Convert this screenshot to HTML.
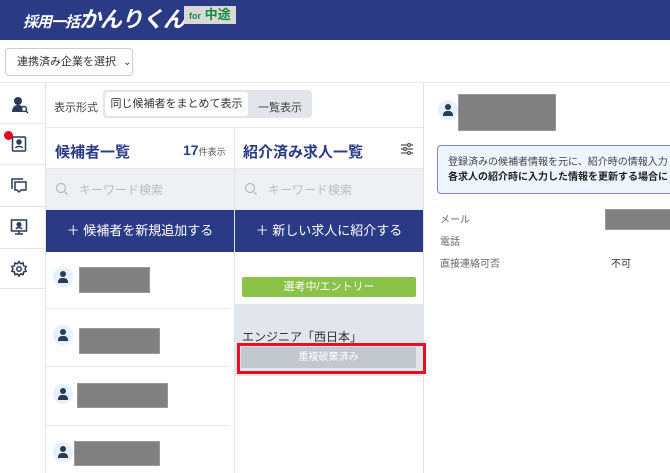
<!DOCTYPE html><html><head><meta charset="utf-8"><style>
*{box-sizing:border-box;margin:0;padding:0}
body{width:670px;height:473px;overflow:hidden;background:#fff;font-family:"Liberation Sans","Noto Sans CJK JP",sans-serif;position:relative;color:#333}
.a{position:absolute}
.g{background:#808080;border:1px solid #999}
.av{position:absolute;width:20px;height:20px;border-radius:50%;background:#e4f0fb}
.av::before{content:"";position:absolute;left:7px;top:4px;width:6px;height:6px;border-radius:50%;background:#2d3a55}
.av::after{content:"";position:absolute;left:5px;top:11px;width:10px;height:5px;border-radius:4px 4px 0 0;background:#2d3a55}
.t{white-space:nowrap}
</style></head><body>
<div class="a" style="left:0;top:0;width:670px;height:40px;background:#2b3a85"></div>
<div class="a t" style="left:23px;top:2px;color:#fff;font-weight:bold;font-style:italic;font-size:15px;letter-spacing:-1px">採用一括<span style="font-size:22px;letter-spacing:-1px">かんりくん</span></div>
<div class="a t" style="left:184px;top:6px;width:52px;height:18px;background:#d8d8d8;color:#1a8a3a;font-weight:bold;font-size:13px;padding-left:5px;line-height:18px"><span style="font-size:9px">for</span> 中途</div>
<div class="a t" style="left:5px;top:48px;width:128px;height:28px;border:1px solid #ccc;border-radius:4px;font-size:11px;line-height:26px;padding-left:11px;color:#333">連携済み企業を選択 <span style="font-size:10px;margin-left:4px">⌄</span></div>
<div class="a" style="left:0;top:82px;width:670px;height:1px;background:#e6e8ec"></div>
<div class="a" style="left:45px;top:83px;width:1px;height:390px;background:#e1e3e7"></div>
<div class="a" style="left:0;top:123px;width:45px;height:1px;background:#e1e3e7"></div>
<div class="a" style="left:0;top:164px;width:45px;height:1px;background:#e1e3e7"></div>
<div class="a" style="left:0;top:206px;width:45px;height:1px;background:#e1e3e7"></div>
<div class="a" style="left:0;top:248px;width:45px;height:1px;background:#e1e3e7"></div>
<div class="a" style="left:0;top:288px;width:45px;height:1px;background:#e1e3e7"></div>
<svg class="a" style="left:10px;top:95px" width="20" height="20" viewBox="0 0 20 20" fill="#2d3a55"><circle cx="8" cy="6" r="4"/><path d="M2 17c0-5 3-7 6-7s4 1 4 2v5z"/><circle cx="14" cy="14" r="2.5" fill="none" stroke="#2d3a55" stroke-width="1.5"/><path d="M16 16l2 2" stroke="#2d3a55" stroke-width="1.5"/></svg>
<div class="a" style="left:4px;top:131px;width:9px;height:9px;border-radius:50%;background:#e8001c"></div>
<svg class="a" style="left:10px;top:135px" width="18" height="18" viewBox="0 0 18 18" fill="none" stroke="#2d3a55" stroke-width="1.5"><rect x="2.5" y="2" width="13" height="14" rx="1"/><circle cx="9" cy="7" r="2" fill="#2d3a55"/><path d="M5.5 13c1-2 6-2 7 0" /></svg>
<svg class="a" style="left:10px;top:176px" width="18" height="18" viewBox="0 0 18 18" fill="none" stroke="#2d3a55" stroke-width="1.5"><path d="M2 13V3h11"/><path d="M5 6h11v8h-5l-2 2-2-2H5z"/></svg>
<svg class="a" style="left:10px;top:218px" width="18" height="18" viewBox="0 0 18 18" fill="none" stroke="#2d3a55" stroke-width="1.5"><rect x="1.5" y="2" width="15" height="11"/><circle cx="9" cy="6.5" r="1.8" fill="#2d3a55"/><path d="M6 11c1-2 5-2 6 0M9 13v3M5 16h8"/></svg>
<svg class="a" style="left:10px;top:260px" width="18" height="18" viewBox="0 0 24 24" fill="none" stroke="#2d3a55" stroke-width="2"><circle cx="12" cy="12" r="3"/><path d="M12 2l2 3 3.5-1 .5 3.5 3.5 1-1.5 3.5 1.5 3-3.5 1-.5 3.5-3.5-1-2 3-2-3-3.5 1-.5-3.5-3.5-1 1.5-3.5L2.5 8.5 6 7.5 6.5 4l3.5 1z"/></svg>
<div class="a t" style="left:54px;top:99px;font-size:11px;color:#444">表示形式</div>
<div class="a" style="left:103px;top:90px;width:209px;height:28px;background:#e2e5ea;border-radius:4px"></div>
<div class="a t" style="left:105px;top:92px;width:143px;height:24px;background:#fff;border-radius:3px;font-size:11px;line-height:24px;text-align:center;color:#333">同じ候補者をまとめて表示</div>
<div class="a t" style="left:258px;top:99px;font-size:11px;color:#444">一覧表示</div>
<div class="a" style="left:46px;top:127px;width:377px;height:1px;background:#e6e8ec"></div>
<div class="a" style="left:234px;top:127px;width:1px;height:346px;background:#e1e3e7"></div>
<div class="a" style="left:423px;top:83px;width:1px;height:390px;background:#e1e3e7"></div>
<div class="a t" style="left:55px;top:141px;font-size:15px;font-weight:bold;color:#2b3a85">候補者一覧</div>
<div class="a t" style="left:183px;top:142px;font-size:14px;font-weight:bold;color:#2b3a85">17<span style="font-size:9px;font-weight:normal;color:#555">件表示</span></div>
<div class="a t" style="left:243px;top:141px;font-size:15px;font-weight:bold;color:#2b3a85">紹介済み求人一覧</div>
<svg class="a" style="left:400px;top:142px" width="14" height="14" viewBox="0 0 14 14" stroke="#555" stroke-width="1.3" fill="#fff"><path d="M1 3h12M1 7h12M1 11h12"/><circle cx="9" cy="3" r="1.5"/><circle cx="5" cy="7" r="1.5"/><circle cx="9" cy="11" r="1.5"/></svg>
<div class="a" style="left:46px;top:168px;width:377px;height:1px;background:#e6e8ec"></div>
<div class="a" style="left:46px;top:169px;width:188px;height:41px;background:#eef0f3"></div>
<div class="a" style="left:235px;top:169px;width:188px;height:41px;background:#eef0f3"></div>
<svg class="a" style="left:55px;top:182px" width="14" height="14" viewBox="0 0 14 14" fill="none" stroke="#bbb" stroke-width="1.3"><circle cx="6" cy="6" r="4.5"/><path d="M9.5 9.5l3 3"/></svg>
<svg class="a" style="left:244px;top:182px" width="14" height="14" viewBox="0 0 14 14" fill="none" stroke="#bbb" stroke-width="1.3"><circle cx="6" cy="6" r="4.5"/><path d="M9.5 9.5l3 3"/></svg>
<div class="a t" style="left:79px;top:181px;font-size:12px;color:#bbb">キーワード検索</div>
<div class="a t" style="left:268px;top:181px;font-size:12px;color:#bbb">キーワード検索</div>
<div class="a t" style="left:46px;top:210px;width:188px;height:42px;background:#2b3a85;color:#fff;font-size:13px;line-height:42px;text-align:center">＋ 候補者を新規追加する</div>
<div class="a t" style="left:235px;top:210px;width:188px;height:42px;background:#2b3a85;color:#fff;font-size:13px;line-height:42px;text-align:center">＋ 新しい求人に紹介する</div>
<div class="a" style="left:46px;top:308px;width:184px;height:1px;background:#e6e8ec"></div>
<div class="a" style="left:46px;top:366px;width:184px;height:1px;background:#e6e8ec"></div>
<div class="a" style="left:46px;top:425px;width:184px;height:1px;background:#e6e8ec"></div>
<div class="av" style="left:53px;top:267px"></div><div class="a g" style="left:79px;top:267px;width:71px;height:26px"></div>
<div class="av" style="left:53px;top:325px"></div><div class="a g" style="left:79px;top:328px;width:81px;height:26px"></div>
<div class="av" style="left:53px;top:384px"></div><div class="a g" style="left:77px;top:383px;width:91px;height:25px"></div>
<div class="av" style="left:53px;top:442px"></div><div class="a g" style="left:74px;top:441px;width:86px;height:25px"></div>
<div class="a t" style="left:242px;top:277px;width:174px;height:20px;background:#8bc34a;border-radius:2px;color:#fff;font-size:11px;line-height:20px;text-align:center">選考中/エントリー</div>
<div class="a" style="left:235px;top:304px;width:188px;height:72px;background:#e2e6ec"></div>
<div class="a t" style="left:242px;top:328px;font-size:12px;color:#333">エンジニア「西日本」</div>
<div class="a" style="left:237px;top:343px;width:189px;height:31px;border:3px solid #e8101e"></div>
<div class="a t" style="left:241px;top:347px;width:175px;height:21px;background:#c3c7ce;color:#fff;font-size:10px;line-height:21px;text-align:center">重複破棄済み</div>
<div class="av" style="left:438px;top:100px"></div>
<div class="a g" style="left:458px;top:94px;width:98px;height:37px"></div>
<div class="a t" style="left:437px;top:145px;width:240px;height:49px;border:1px solid #7a8bc0;border-radius:4px;background:#eef5fd;font-size:10px;padding:9px 0 0 10px;line-height:15px;color:#444">登録済みの候補者情報を元に、紹介時の情報入力<br><b style="color:#222">各求人の紹介時に入力した情報を更新する場合に</b></div>
<div class="a t" style="left:440px;top:211px;font-size:10px;color:#666">メール</div>
<div class="a g" style="left:605px;top:209px;width:70px;height:21px"></div>
<div class="a t" style="left:440px;top:233px;font-size:10px;color:#666">電話</div>
<div class="a t" style="left:440px;top:255px;font-size:10px;color:#666">直接連絡可否</div>
<div class="a t" style="left:611px;top:255px;font-size:10px;color:#333">不可</div>
</body></html>
